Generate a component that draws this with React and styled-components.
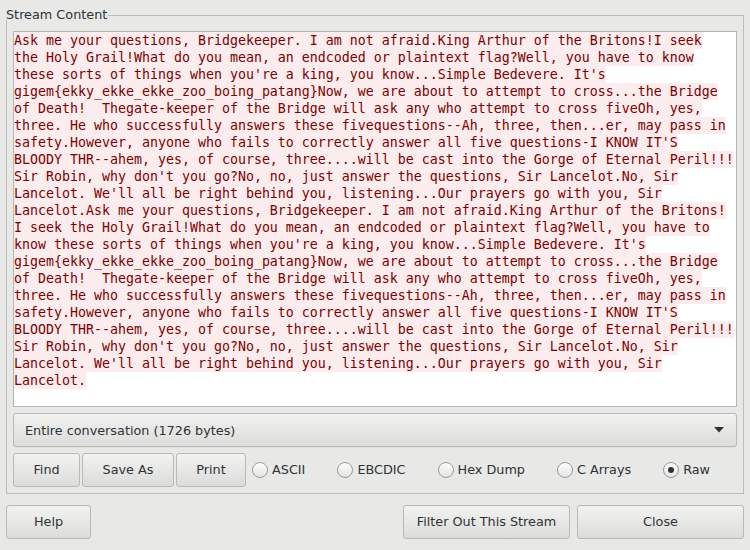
import React from "react";
import styled, { createGlobalStyle } from "styled-components";

const GlobalStyle = createGlobalStyle`
  html, body {
    margin: 0;
    padding: 0;
    background: #e8e8e7;
  }
  body {
    width: 750px;
    height: 550px;
    overflow: hidden;
    font-family: "DejaVu Sans", "Liberation Sans", sans-serif;
    font-size: 12.8px;
    color: #2e3436;
  }
  * { box-sizing: border-box; }
`;

const Window = styled.div`
  width: 750px;
  height: 550px;
  padding: 7px 6px 0 6px;
  display: flex;
  flex-direction: column;
`;

const Group = styled.div`
  display: flex;
  flex-direction: column;
`;

const GroupHead = styled.div`
  display: flex;
  align-items: flex-start;
  height: 13px;
`;

const GroupTitle = styled.span`
  line-height: 15px;
  padding-right: 1px;
  white-space: nowrap;
`;

const GroupLine = styled.div`
  flex: 1;
  align-self: stretch;
  margin-top: 8px;
  border-top: 1px solid #bdbdbb;
  border-right: 1px solid #bdbdbb;
`;

const GroupBody = styled.div`
  border: 1px solid #bdbdbb;
  border-top: none;
  padding: 11px 6px 6px 6px;
  display: flex;
  flex-direction: column;
  gap: 6px;
`;

const TextArea = styled.div`
  height: 376px;
  background: #ffffff;
  border: 1px solid #b6b6b4;
  overflow: hidden;
  font-family: "DejaVu Sans Mono", "Liberation Mono", monospace;
  font-size: 13.29px;
  white-space: pre;
`;

const Line = styled.div`
  width: fit-content;
  height: 17px;
  line-height: 17px;
  background: #fbeded;
  color: #7f0000;
`;

const Combo = styled.div`
  height: 34px;
  display: flex;
  align-items: center;
  justify-content: space-between;
  padding: 0 12px 0 11px;
  border: 1px solid #b9b9b6;
  border-radius: 3px;
  background: linear-gradient(#f2f2f1, #dcdcdb);
  box-shadow: 0 1px 0 rgba(0, 0, 0, 0.04);
`;

const Arrow = styled.svg`
  width: 10px;
  height: 6px;
  display: block;
`;

const ButtonRow = styled.div`
  height: 34px;
  display: flex;
  align-items: stretch;
  gap: 2px;
`;

const Button = styled.div`
  width: ${(p) => p.$w}px;
  height: 34px;
  display: flex;
  align-items: center;
  justify-content: center;
  padding-bottom: 1px;
  border: 1px solid #b9b9b6;
  border-radius: 3px;
  background: linear-gradient(#f2f2f1, #dcdcdb);
  color: #2e3436;
  white-space: nowrap;
`;

const Radios = styled.div`
  display: flex;
  align-items: center;
  gap: 32px;
  margin-left: 4px;
  padding-bottom: 1px;
`;

const Radio = styled.div`
  display: flex;
  align-items: center;
  gap: 4px;
  white-space: nowrap;
`;

const Circle = styled.span`
  width: 16px;
  height: 16px;
  border-radius: 50%;
  border: 1px solid #9a9a98;
  background: linear-gradient(#fdfdfd, #e4e4e3);
  display: flex;
  align-items: center;
  justify-content: center;
  &::after {
    content: "";
    width: 6px;
    height: 6px;
    border-radius: 50%;
    background: #2e3436;
    display: ${(p) => (p.$checked ? "block" : "none")};
  }
`;

const Footer = styled.div`
  margin-top: 11px;
  height: 34px;
  display: flex;
  gap: 7px;
`;

const Spacer = styled.div`
  flex: 1;
`;

const BLOCK = [
  "three. He who successfully answers these fivequestions--Ah, three, then...er, may pass in",
  "safety.However, anyone who fails to correctly answer all five questions-I KNOW IT'S",
  "BLOODY THR--ahem, yes, of course, three....will be cast into the Gorge of Eternal Peril!!!",
  "Sir Robin, why don't you go?No, no, just answer the questions, Sir Lancelot.No, Sir",
  "Lancelot. We'll all be right behind you, listening...Our prayers go with you, Sir",
];

const LINES = [
  "Ask me your questions, Bridgekeeper. I am not afraid.King Arthur of the Britons!I seek",
  "the Holy Grail!What do you mean, an endcoded or plaintext flag?Well, you have to know",
  "these sorts of things when you're a king, you know...Simple Bedevere. It's",
  "gigem{ekky_ekke_ekke_zoo_boing_patang}Now, we are about to attempt to cross...the Bridge",
  "of Death!  Thegate-keeper of the Bridge will ask any who attempt to cross fiveOh, yes,",
  ...BLOCK,
  "Lancelot.Ask me your questions, Bridgekeeper. I am not afraid.King Arthur of the Britons!",
  "I seek the Holy Grail!What do you mean, an endcoded or plaintext flag?Well, you have to",
  "know these sorts of things when you're a king, you know...Simple Bedevere. It's",
  "gigem{ekky_ekke_ekke_zoo_boing_patang}Now, we are about to attempt to cross...the Bridge",
  "of Death!  Thegate-keeper of the Bridge will ask any who attempt to cross fiveOh, yes,",
  ...BLOCK,
  "Lancelot.",
];

const MODES = [
  { label: "ASCII" },
  { label: "EBCDIC" },
  { label: "Hex Dump" },
  { label: "C Arrays" },
  { label: "Raw", checked: true },
];

export default function App() {
  return (
    <>
      <GlobalStyle />
      <Window>
        <Group>
          <GroupHead>
            <GroupTitle>Stream Content</GroupTitle>
            <GroupLine />
          </GroupHead>
          <GroupBody>
            <TextArea>
              {LINES.map((l, i) => (
                <Line key={i}>{l}</Line>
              ))}
            </TextArea>
            <Combo>
              <span>Entire conversation (1726 bytes)</span>
              <Arrow viewBox="0 0 10 6">
                <path d="M0 0 L10 0 L5 5.5 Z" fill="#2e3436" />
              </Arrow>
            </Combo>
            <ButtonRow>
              <Button $w={67}>Find</Button>
              <Button $w={92}>Save As</Button>
              <Button $w={70}>Print</Button>
              <Radios>
                {MODES.map((m) => (
                  <Radio key={m.label}>
                    <Circle $checked={m.checked} />
                    <span>{m.label}</span>
                  </Radio>
                ))}
              </Radios>
            </ButtonRow>
          </GroupBody>
        </Group>
        <Footer>
          <Button $w={85}>Help</Button>
          <Spacer />
          <Button $w={167}>Filter Out This Stream</Button>
          <Button $w={167}>Close</Button>
        </Footer>
      </Window>
    </>
  );
}
